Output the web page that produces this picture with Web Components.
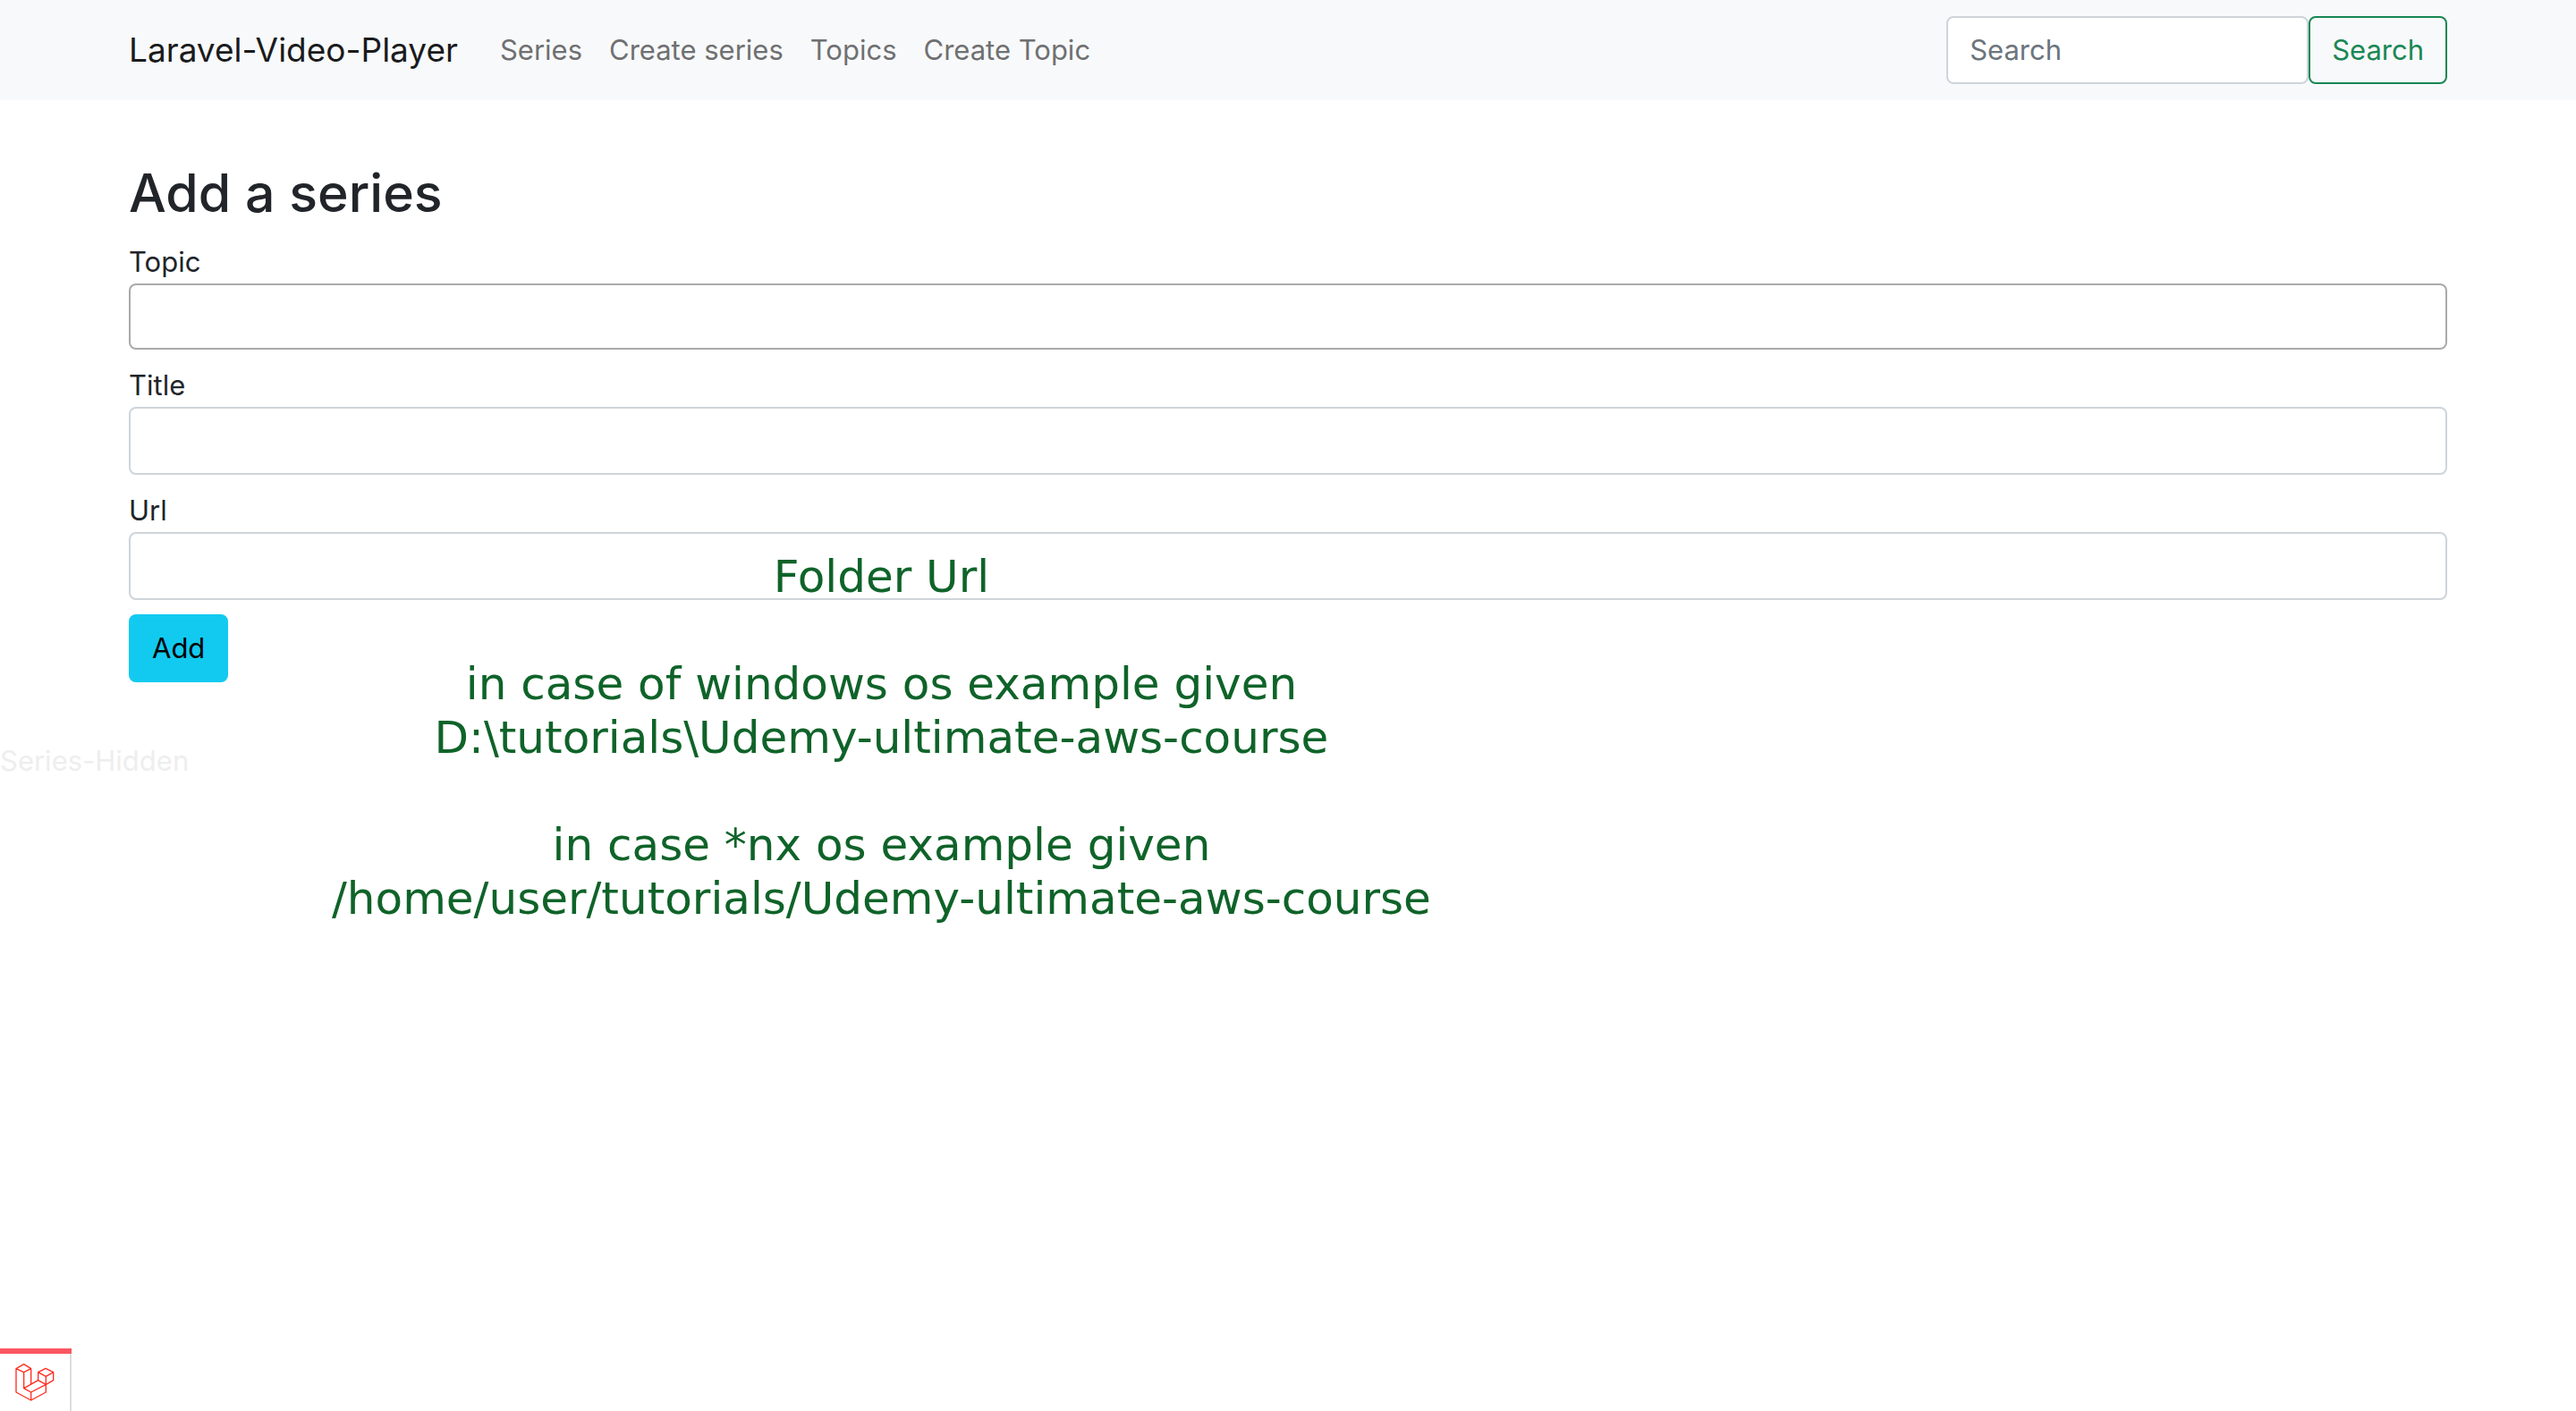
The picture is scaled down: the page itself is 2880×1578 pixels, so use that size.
<!DOCTYPE html>
<html lang="en">
<head>
<meta charset="utf-8">
<title>Add a series</title>
<style>
  body { margin: 0; min-height: 100vh; background: #fff; color: #212529;
    font: 400 31px/48px Inter, "Liberation Sans", sans-serif; }
</style>
</head>
<body>
<video-app></video-app>
<script>
const define = (name, html, setup) => {
  const tpl = document.createElement('template');
  tpl.innerHTML = '<style>*{box-sizing:border-box}</style>' + html;
  customElements.define(name, class extends HTMLElement {
    constructor() {
      super();
      this.attachShadow({ mode: 'open' }).append(tpl.content.cloneNode(true));
    }
    connectedCallback() { if (setup) setup(this, this.shadowRoot); }
  });
};

define('nav-link', `
<style>
  :host { display: block; }
  a { display: block; padding: 16px 15px; color: #6f7071; text-decoration: none; }
</style>
<a href="#"><slot></slot></a>`);

define('site-search', `
<style>
  :host { display: block; }
  form { display: flex; margin: 0; }
  input, button { font: inherit; padding: 12px 24px; border-radius: 8px; margin: 0; }
  input { width: 405px; color: #212529; background: #fff; border: 2px solid #ced4da; }
  input::placeholder { color: #6c757d; opacity: 1; }
  button { color: #198754; background: transparent; border: 2px solid #198754; }
</style>
<form><input type="search" placeholder="Search" aria-label="Search"><button type="button">Search</button></form>`);

define('site-navbar', `
<style>
  :host { display: block; background: #f8f9fb; }
  nav { display: flex; align-items: center; max-width: 2640px; margin: 0 auto; padding: 16px 24px; }
  .brand { color: #1a1b1c; text-decoration: none; font-size: 37px; line-height: 52px; margin-right: 32px; }
  .links { display: flex; flex: 1; }
</style>
<nav>
  <a class="brand" href="#">Laravel-Video-Player</a>
  <div class="links"><slot></slot></div>
  <site-search></site-search>
</nav>`);

define('form-field', `
<style>
  :host { display: block; }
  label { display: block; }
  input, select { display: block; width: 100%; height: 76px; margin: 0; padding: 12px 24px;
    font: inherit; color: inherit; background: #fff; border: 2px solid #ced4da; border-radius: 8px; }
  select { appearance: none; height: 74px; border-color: #aaa; }
</style>
<label for="control"></label>`, (host, root) => {
  root.querySelector('label').textContent = host.getAttribute('label');
  const control = document.createElement(host.hasAttribute('choice') ? 'select' : 'input');
  control.id = 'control';
  root.append(control);
});

define('folder-hint', `
<style>
  :host { display: block; position: absolute; top: 68px; left: 227px; text-align: center;
    font: 50px/60px Verdana, "DejaVu Sans", sans-serif; color: #0f6329; white-space: nowrap; pointer-events: none; }
  p { margin: 0 0 60px; }
</style>
<p>Folder Url</p>
<p>in case of windows os example given<br>D:\\tutorials\\Udemy-ultimate-aws-course</p>
<p>in case *nx os example given<br>/home/user/tutorials/Udemy-ultimate-aws-course</p>`);

define('series-form', `
<style>
  :host { display: block; max-width: 2640px; margin: 0 auto; padding: 64px 24px; }
  h2 { margin: 0 0 13px; font-size: 59px; line-height: 80px; font-weight: 500; }
  form { display: flex; flex-direction: column; gap: 16px; margin: 0; }
  .url { position: relative; }
  button { align-self: flex-start; font: inherit; color: #000; background: #12caf0;
    border: 2px solid #12caf0; border-radius: 8px; padding: 12px 24px; }
</style>
<h2>Add a series</h2>
<form>
  <form-field label="Topic" choice></form-field>
  <form-field label="Title"></form-field>
  <div class="url"><form-field label="Url"></form-field><folder-hint></folder-hint></div>
  <button type="button">Add</button>
</form>`);

define('debug-toggle', `
<style>
  :host { display: block; position: fixed; left: 0; bottom: 0; }
  button { display: flex; align-items: center; justify-content: center; width: 80px; height: 64px;
    margin: 0; padding: 0; background: #fff; border: 0; border-right: 2px solid #ddd; }
  .bar { border-top: 6px solid #fb5661; }
  svg { display: block; width: 46px; height: 46px; }
</style>
<div class="bar"><button type="button" aria-label="Open debug bar">
  <svg viewBox="48 98 138 138" fill="none" stroke="#ff2d20" stroke-width="4" stroke-linejoin="round">
    <path d="M54 121 80 106 104 121 80 133ZM54 121V200L104 227 154 200V174M80 133V187L104 200V227M104 121V173M80 187 128 160M104 200 154 174M128 133 153 120 179 133 154 147ZM128 133V160L154 174 179 160V133M154 147V174"/>
  </svg>
</button></div>`);

define('video-app', `
<style>
  :host { display: block; }
  .hidden-note { color: #eee; }
</style>
<site-navbar>
  <nav-link>Series</nav-link><nav-link>Create series</nav-link><nav-link>Topics</nav-link><nav-link>Create Topic</nav-link>
</site-navbar>
<main>
  <series-form></series-form>
  <div class="hidden-note">Series-Hidden</div>
</main>
<debug-toggle></debug-toggle>`);
</script>
</body>
</html>
